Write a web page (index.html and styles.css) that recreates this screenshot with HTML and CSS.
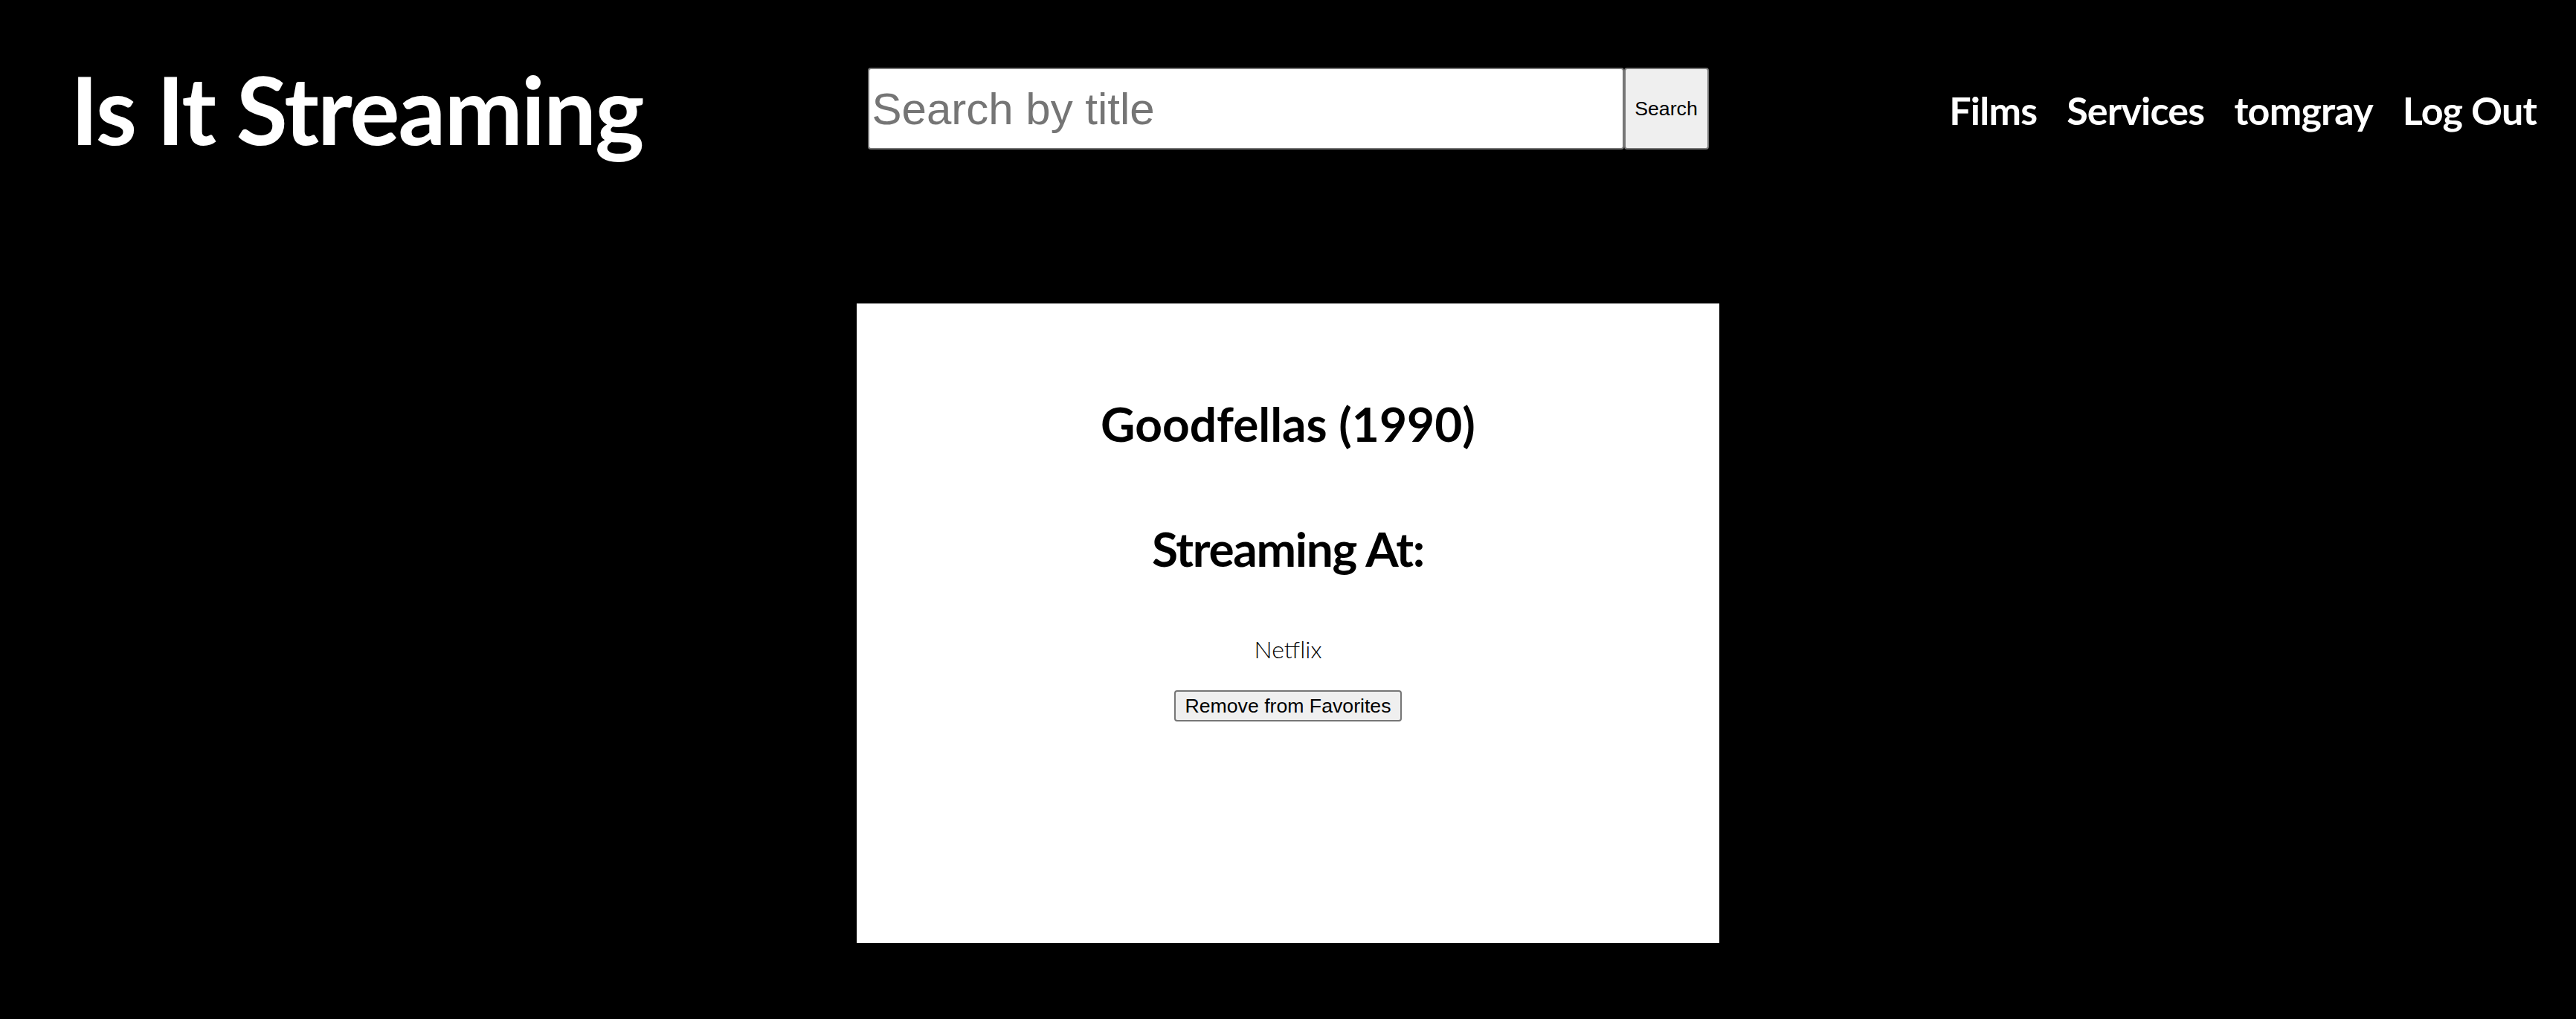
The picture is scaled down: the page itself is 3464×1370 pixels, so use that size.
FILE: index.html
```html
<!DOCTYPE html>
<html lang="en">
<head>
<meta charset="utf-8">
<title>Is It Streaming</title>
<link rel="stylesheet" href="styles.css">
</head>
<body>
<header class="topbar">
  <h1 class="brand">Is It Streaming</h1>
  <form class="search" onsubmit="return false;">
    <input class="search-input" type="text" placeholder="Search by title">
    <button class="search-btn" type="submit">Search</button>
  </form>
  <nav class="nav">
    <a class="nav-link" href="#">Films</a>
    <a class="nav-link" href="#">Services</a>
    <a class="nav-link" href="#">tomgray</a>
    <a class="nav-link" href="#">Log Out</a>
  </nav>
</header>
<main class="content">
  <section class="card">
    <h2 class="film-title">Goodfellas (1990)</h2>
    <h2 class="streaming-heading">Streaming At:</h2>
    <p class="service">Netflix</p>
    <button class="fav-btn" type="button">Remove from Favorites</button>
  </section>
</main>
</body>
</html>
```
FILE: styles.css
```css
html, body {
  margin: 0;
  padding: 0;
  background: #000;
}
body {
  font-family: Lato, "Noto Sans", sans-serif;
  color: #000;
  width: 3464px;
  height: 1370px;
  overflow: hidden;
}
.topbar {
  height: 292px;
  box-sizing: border-box;
  padding: 0 53px;
  display: grid;
  grid-template-columns: 1fr auto 1fr;
  align-items: center;
}
.brand {
  margin: 0 0 0 42px;
  font-family: Lato, sans-serif;
  font-weight: 700;
  font-size: 126px;
  letter-spacing: -2px;
  line-height: normal;
  color: #fff;
  justify-self: start;
  white-space: nowrap;
}
.search {
  display: flex;
  align-items: stretch;
  margin: 0;
}
.search-input {
  box-sizing: border-box;
  width: 1017px;
  height: 110px;
  border: 2px solid #767676;
  border-radius: 4px;
  padding: 0 4px;
  font-family: "Liberation Sans", Arial, sans-serif;
  font-size: 60px;
  background: #fff;
  color: #000;
  outline: none;
}
.search-input::placeholder {
  color: #757575;
}
.search-btn {
  box-sizing: border-box;
  width: 114px;
  height: 110px;
  border: 2px solid #767676;
  border-radius: 4px;
  background: #efefef;
  font-family: "Liberation Sans", Arial, sans-serif;
  font-size: 26.67px;
  color: #000;
  padding: 0;
}
.nav {
  justify-self: end;
  display: flex;
  gap: 40px;
  margin-top: 4px;
}
.nav-link {
  color: #fff;
  text-decoration: none;
  font-weight: 700;
  font-size: 52px;
  letter-spacing: -0.8px;
  white-space: nowrap;
}
.content {
  display: flex;
  justify-content: center;
  padding-top: 116px;
}
.card {
  box-sizing: border-box;
  width: 1160px;
  height: 860px;
  background: #fff;
  padding-top: 123px;
  display: flex;
  flex-direction: column;
  align-items: center;
  text-align: center;
}
.film-title,
.streaming-heading {
  margin: 0;
  font-weight: 700;
  font-size: 64px;
  line-height: normal;
}
.film-title {
  margin-bottom: 91px;
}
.streaming-heading {
  margin-bottom: 77px;
  letter-spacing: -1.3px;
}
.service {
  margin: 0 0 36px;
  font-weight: 300;
  font-size: 32px;
  line-height: normal;
}
.fav-btn {
  box-sizing: border-box;
  height: 42px;
  padding: 0 12px;
  border: 2px solid #767676;
  border-radius: 4px;
  background: #efefef;
  font-family: "Liberation Sans", Arial, sans-serif;
  font-size: 26.67px;
  color: #000;
}
```
